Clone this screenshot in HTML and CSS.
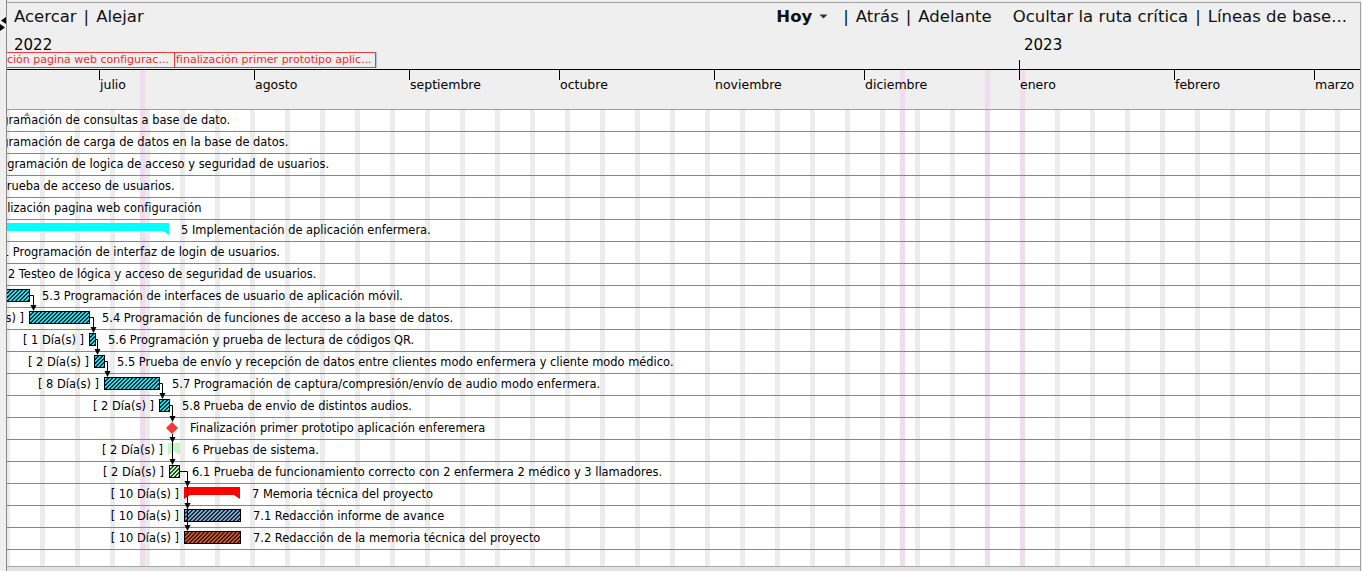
FILE: index.html
```html
<!DOCTYPE html>
<html lang="es">
<head>
<meta charset="utf-8">
<title>Diagrama de Gantt</title>
<link rel="stylesheet" href="styles.css">
</head>
<body>
<div class="app">
  <div class="side">
    <svg class="side-arrows" width="6" height="14" viewBox="0 0 6 14"><polygon points="6,0 6,7 1,3.5"/><polygon points="0,7 0,14 5,10.5"/></svg>
  </div>
  <div class="main">
    <div class="toolbar">
      <div class="tb-group">
        <span>Acercar</span><span class="sep">|</span><span>Alejar</span>
      </div>
      <div class="tb-group">
        <span class="bold">Hoy</span><svg class="caret" width="9" height="5" viewBox="0 0 9 5"><polygon points="0.5,0.5 8.5,0.5 4.5,4.5"/></svg><span class="sep">|</span><span>Atrás</span><span class="sep">|</span><span>Adelante</span>
        <span class="gap">Ocultar la ruta crítica</span><span class="sep">|</span><span>Líneas de base...</span>
      </div>
    </div>

    <div class="timeline">
      <div class="holiday" style="left:133px"></div>
      <div class="holiday" style="left:893px"></div>
      <div class="holiday" style="left:978px"></div>
      <div class="holiday" style="left:1013px"></div>

      <span class="year" style="left:7px">2022</span>
      <span class="year" style="left:1017px">2023</span>

      <div class="ms-box" style="left:-43px;width:211px">Finalización pagina web configurac...</div>
      <div class="ms-box ms-last" style="left:167px;width:202px">finalización primer prototipo aplic...</div>

      <div class="axis"></div>
      <div class="tick year-tick" style="left:1012px"></div>

      <div class="tick" style="left:92px"></div><span class="month" style="left:93px">julio</span>
      <div class="tick" style="left:247px"></div><span class="month" style="left:248px">agosto</span>
      <div class="tick" style="left:402px"></div><span class="month" style="left:403px">septiembre</span>
      <div class="tick" style="left:552px"></div><span class="month" style="left:553px">octubre</span>
      <div class="tick" style="left:707px"></div><span class="month" style="left:708px">noviembre</span>
      <div class="tick" style="left:857px"></div><span class="month" style="left:858px">diciembre</span>
      <div class="tick" style="left:1012px"></div><span class="month" style="left:1013px">enero</span>
      <div class="tick" style="left:1167px"></div><span class="month" style="left:1168px">febrero</span>
      <div class="tick" style="left:1307px"></div><span class="month" style="left:1308px">marzo</span>
    </div>

    <div class="chart">
      <div class="holiday" style="left:133px"></div>
      <div class="holiday" style="left:893px"></div>
      <div class="holiday" style="left:978px"></div>
      <div class="holiday" style="left:1013px"></div>

      <div class="row"><span class="label" style="left:-24px">Programación de consultas a base de dato.</span><span class="marker"></span></div>
      <div class="row"><span class="label" style="left:-24px">Programación de carga de datos en la base de datos.</span></div>
      <div class="row"><span class="label" style="left:-18px">Programación de logica de acceso y seguridad de usuarios.</span></div>
      <div class="row"><span class="label" style="left:-7px">Prueba de acceso de usuarios.</span></div>
      <div class="row"><span class="label" style="left:-23px">Finalización pagina web configuración</span></div>
      <div class="row">
        <div class="task" style="left:-60px;width:222px"><div class="summary sum-cyan"></div><span class="name">5 Implementación de aplicación enfermera.</span></div>
      </div>
      <div class="row"><span class="label" style="left:-16px">5.1 Programación de interfaz de login de usuarios.</span></div>
      <div class="row"><span class="label" style="left:-10px">5.2 Testeo de lógica y acceso de seguridad de usuarios.</span></div>
      <div class="row">
        <div class="task" style="left:-37px;width:60px"><span class="dur">[ 12 Día(s) ]</span><div class="bar hatch-cyan"></div><span class="name">5.3 Programación de interfaces de usuario de aplicación móvil.</span></div>
      </div>
      <div class="row">
        <div class="task" style="left:22px;width:61px"><span class="dur">[ 12 Día(s) ]</span><div class="bar hatch-cyan"></div><span class="name">5.4 Programación de funciones de acceso a la base de datos.</span></div>
      </div>
      <div class="row">
        <div class="task" style="left:82px;width:7px"><span class="dur">[ 1 Día(s) ]</span><div class="bar hatch-cyan"></div><span class="name">5.6 Programación y prueba de lectura de códigos QR.</span></div>
      </div>
      <div class="row">
        <div class="task" style="left:87px;width:11px"><span class="dur">[ 2 Día(s) ]</span><div class="bar hatch-cyan"></div><span class="name">5.5 Prueba de envío y recepción de datos entre clientes modo enfermera y cliente modo médico.</span></div>
      </div>
      <div class="row">
        <div class="task" style="left:97px;width:56px"><span class="dur">[ 8 Día(s) ]</span><div class="bar hatch-cyan"></div><span class="name">5.7 Programación de captura/compresión/envío de audio modo enfermera.</span></div>
      </div>
      <div class="row">
        <div class="task" style="left:152px;width:11px"><span class="dur">[ 2 Día(s) ]</span><div class="bar hatch-cyan"></div><span class="name">5.8 Prueba de envio de distintos audios.</span></div>
      </div>
      <div class="row">
        <div class="task" style="left:159px;width:12px"><div class="milestone"></div><span class="name">Finalización primer prototipo aplicación enferemera</span></div>
      </div>
      <div class="row">
        <div class="task" style="left:161px;width:12px"><span class="dur">[ 2 Día(s) ]</span><div class="summary sum-green"></div><span class="name">6 Pruebas de sistema.</span></div>
      </div>
      <div class="row">
        <div class="task" style="left:162px;width:11px"><span class="dur">[ 2 Día(s) ]</span><div class="bar hatch-green"></div><span class="name">6.1 Prueba de funcionamiento correcto con 2 enfermera 2 médico y 3 llamadores.</span></div>
      </div>
      <div class="row">
        <div class="task" style="left:177px;width:56px"><span class="dur">[ 10 Día(s) ]</span><div class="summary sum-red"></div><span class="name">7 Memoria técnica del proyecto</span></div>
      </div>
      <div class="row">
        <div class="task" style="left:177px;width:57px"><span class="dur">[ 10 Día(s) ]</span><div class="bar hatch-blue"></div><span class="name">7.1 Redacción informe de avance</span></div>
      </div>
      <div class="row">
        <div class="task" style="left:177px;width:57px"><span class="dur">[ 10 Día(s) ]</span><div class="bar hatch-brown"></div><span class="name">7.2 Redacción de la memoria técnica del proyecto</span></div>
      </div>

      <svg class="links" width="1353" height="456" viewBox="0 0 1353 456">
        <g fill="none" stroke="#000" stroke-width="1">
          <path d="M23 185.5 H26.5 V196"/>
          <path d="M83 207.5 H86.5 V218"/>
          <path d="M89 229.5 H90.5 V240"/>
          <path d="M98 251.5 H100.5 V262"/>
          <path d="M153 273.5 H155.5 V284"/>
          <path d="M163 295.5 H165.5 V307"/>
          <path d="M165.5 324 V350"/>
          <path d="M173 361.5 H180.5 V416"/>
        </g>
        <g fill="#000">
          <polygon points="23.5,195 29.5,195 26.5,201"/>
          <polygon points="83.5,217 89.5,217 86.5,223"/>
          <polygon points="87.5,239 93.5,239 90.5,245"/>
          <polygon points="97.5,261 103.5,261 100.5,267"/>
          <polygon points="152.5,283 158.5,283 155.5,289"/>
          <polygon points="162.5,306 168.5,306 165.5,312"/>
          <polygon points="162.5,327 168.5,327 165.5,333"/>
          <polygon points="162.5,349 168.5,349 165.5,355"/>
          <polygon points="177.5,371 183.5,371 180.5,377"/>
          <polygon points="177.5,393 183.5,393 180.5,399"/>
          <polygon points="177.5,415 183.5,415 180.5,421"/>
        </g>
      </svg>
    </div>
    <div class="hscroll"></div>
  </div>
</div>
</body>
</html>
```

FILE: styles.css
```css
* { box-sizing: border-box; }
html, body { margin: 0; padding: 0; }
body {
  width: 1362px;
  height: 571px;
  overflow: hidden;
  background: #efefef;
  font-family: "DejaVu Sans", Verdana, sans-serif;
  color: #000;
}
.app { display: flex; height: 571px; }
.side {
  width: 7px;
  flex: none;
  background: #efefef;
  border-right: 1px solid #8a8a8a;
  padding-top: 17px;
}
.side-arrows { display: block; fill: #000; }
.main {
  flex: 1;
  min-width: 0;
  margin-top: 2px;
  margin-right: 1px;
  border-top: 1px solid #a3a3a3;
  border-right: 1px solid #a3a3a3;
  background: #efefef;
  display: flex;
  flex-direction: column;
}

/* toolbar */
.toolbar {
  height: 27px;
  flex: none;
  display: flex;
  justify-content: space-between;
  align-items: center;
  padding: 0 13px 0 7px;
  font-size: 16.5px;
  white-space: nowrap;
  color: #111;
}
.tb-group { display: flex; align-items: center; }
.sep { padding: 0 7px; }
.bold { font-weight: bold; }
.caret { display: block; margin: 0 8px 0 7px; fill: #333; }
.gap { margin-left: 21px; }

/* timeline header */
.timeline {
  position: relative;
  flex: none;
  height: 80px;
  border-bottom: 1px solid #9c9c9c;
  overflow: hidden;
}
.year {
  position: absolute;
  top: 6px;
  font-size: 15px;
  line-height: 18px;
}
.ms-box {
  position: absolute;
  top: 22px;
  height: 16px;
  border: 1px solid #f03a3a;
  color: #f42a2a;
  font-size: 11px;
  line-height: 14px;
  padding-left: 1px;
  white-space: nowrap;
  overflow: hidden;
}
.ms-last { box-shadow: 1px 0 0 #a8c8e8; }
.axis {
  position: absolute;
  top: 39px;
  left: 0;
  right: 0;
  height: 1px;
  background: #000;
}
.tick {
  position: absolute;
  top: 39px;
  width: 1px;
  height: 11px;
  background: #000;
}
.year-tick { top: 30px; height: 20px; }
.month {
  position: absolute;
  top: 47px;
  font-size: 12.5px;
  line-height: 15px;
}
.holiday {
  position: absolute;
  top: 40px;
  bottom: 0;
  width: 5px;
  background: #efddef;
}

/* chart body */
.chart {
  position: relative;
  flex: none;
  height: 456px;
  overflow: hidden;
  font-size: 11.45px;
  background-color: #fff;
  background-image: linear-gradient(to right, #ececec 0, #ececec 5px, transparent 5px, transparent 35px);
  background-size: 35px 100%;
  background-position: 33px 0;
  background-repeat: repeat-x;
}
.chart .holiday { top: 0; }
.row {
  position: relative;
  height: 22px;
  border-bottom: 1px solid #868686;
}
.label, .name, .dur {
  position: absolute;
  top: 0;
  line-height: 21px;
  white-space: nowrap;
}
.name { left: calc(100% + 12px); }
.dur { right: calc(100% + 5px); }
.marker {
  position: absolute;
  left: 17px;
  top: 2px;
  width: 0;
  height: 0;
  border-left: 3px solid transparent;
  border-right: 3px solid transparent;
  border-bottom: 4px solid #9a9a9a;
}
.task {
  position: absolute;
  top: 0;
  bottom: 0;
}
.bar {
  position: absolute;
  left: 0;
  right: 0;
  top: 3px;
  height: 13px;
  border: 1px solid #000;
}
.hatch-cyan { background: repeating-linear-gradient(135deg, #10e8f8 0, #10e8f8 1.7px, #0a2a30 1.7px, #0a2a30 2.83px); }
.hatch-green { background: repeating-linear-gradient(135deg, #c4f6be 0, #c4f6be 1.7px, #2e4a2e 1.7px, #2e4a2e 2.83px); }
.hatch-blue { background: repeating-linear-gradient(135deg, #7ea8cc 0, #7ea8cc 1.7px, #1e2c3c 1.7px, #1e2c3c 2.83px); }
.hatch-brown { background: repeating-linear-gradient(135deg, #cc5a30 0, #cc5a30 1.7px, #3c1a0c 1.7px, #3c1a0c 2.83px); }
.summary {
  position: absolute;
  left: 0;
  right: 0;
  top: 3px;
  height: 12px;
  clip-path: polygon(0 0, 100% 0, 100% 100%, calc(100% - 6px) 8px, 6px 8px, 0 100%);
}
.sum-cyan { background: #00ffff; }
.sum-red { background: #ff0000; }
.sum-green { background: #c4f5c4; }
.milestone {
  position: absolute;
  left: 0;
  top: 4px;
  width: 12px;
  height: 12px;
  background: #f23a3a;
  clip-path: polygon(50% 0, 100% 50%, 50% 100%, 0 50%);
}
.links {
  position: absolute;
  left: 0;
  top: 0;
  pointer-events: none;
}
.hscroll {
  flex: 1;
  background: #e2e2e2;
  border-top: 1px solid #a5a5a5;
}
```
